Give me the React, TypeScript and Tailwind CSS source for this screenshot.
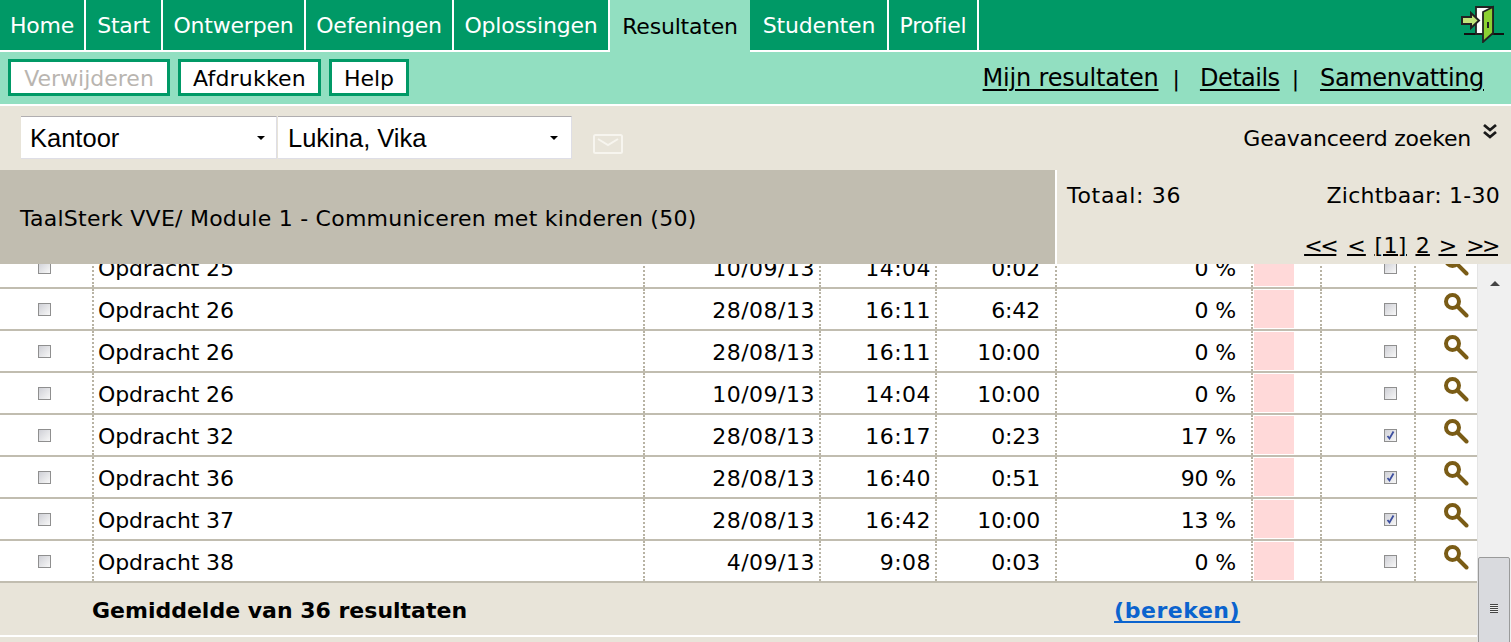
import React from "react";

const font = { fontFamily: '"DejaVu Sans", Verdana, sans-serif' };

const navItems = [
  { label: "Home", w: "w-[86px]" },
  { label: "Start", w: "w-[77px]" },
  { label: "Ontwerpen", w: "w-[143px]" },
  { label: "Oefeningen", w: "w-[148px]" },
  { label: "Oplossingen", w: "w-[156px]" },
];
const navItems2 = [
  { label: "Studenten", w: "w-[138px]" },
  { label: "Profiel", w: "w-[90px]" },
];

const rows: [string, string, string, string, string, boolean][] = [
  ["Opdracht 25", "10/09/13", "14:04", "0:02", "0 %", false],
  ["Opdracht 26", "28/08/13", "16:11", "6:42", "0 %", false],
  ["Opdracht 26", "28/08/13", "16:11", "10:00", "0 %", false],
  ["Opdracht 26", "10/09/13", "14:04", "10:00", "0 %", false],
  ["Opdracht 32", "28/08/13", "16:17", "0:23", "17 %", true],
  ["Opdracht 36", "28/08/13", "16:40", "0:51", "90 %", true],
  ["Opdracht 37", "28/08/13", "16:42", "10:00", "13 %", true],
  ["Opdracht 38", "4/09/13", "9:08", "0:03", "0 %", false],
];

function Check({ checked = false }: { checked?: boolean }) {
  return (
    <span className="relative block w-[13px] h-[13px] border border-[#8f8f8f] bg-gradient-to-br from-[#cfd0d6] to-[#f8f8f8]">
      {checked && (
        <svg viewBox="0 0 11 11" className="absolute inset-0 w-[11px] h-[11px]">
          <path d="M2.5 6 L4.5 8.5 L8.5 1.5" fill="none" stroke="#3d4f9f" strokeWidth="1.8" />
        </svg>
      )}
    </span>
  );
}

function Magnifier() {
  return (
    <svg width="26" height="28" viewBox="0 0 26 28" className="block">
      <circle cx="9.5" cy="9.5" r="6.5" fill="none" stroke="#7a5c16" strokeWidth="4" />
      <path d="M15 15 L23.5 23.5" stroke="#7a5c16" strokeWidth="4" strokeLinecap="round" />
    </svg>
  );
}

function Dot({ className = "" }: { className?: string }) {
  return <div className={"border-l-2 border-dotted border-[#b8b3a4] " + className} />;
}

function Row({ r }: { r: (typeof rows)[number] }) {
  return (
    <div className="flex h-[42px] border-b-2 border-[#c1bdb0] text-[22px] leading-[44px] text-black">
      <div className="w-[92px] flex justify-center pt-[14px] pr-[4px]">
        <Check />
      </div>
      <Dot />
      <div className="w-[549px] pl-[4px] tracking-[-0.15px]">{r[0]}</div>
      <Dot />
      <div className="w-[174px] pr-[4px] text-right tracking-[0.5px]">{r[1]}</div>
      <Dot />
      <div className="w-[114px] pr-[4px] text-right tracking-[0.45px]">{r[2]}</div>
      <Dot />
      <div className="w-[118px] pr-[15px] text-right tracking-[-0.15px]">{r[3]}</div>
      <Dot />
      <div className="w-[194px] pr-[15px] text-right tracking-[-0.15px]">{r[4]}</div>
      <Dot />
      <div className="w-[67px] pl-[1px] pt-[1px] pb-[1px]">
        <div className="w-[40px] h-full bg-[#ffd9d9]" />
      </div>
      <Dot />
      <div className="w-[92px] flex justify-end pt-[14px] pr-[17px]">
        <Check checked={r[5]} />
      </div>
      <Dot />
      <div className="flex-1 pl-[27px] pt-[3px]">
        <Magnifier />
      </div>
    </div>
  );
}

export default function App() {
  return (
    <div className="w-[1511px] h-[642px] overflow-hidden bg-white flex flex-col" style={font}>
      {/* nav */}
      <div className="h-[50px] bg-[#009966] flex text-[22px] tracking-[-0.2px] text-white relative shrink-0">
        {navItems.map((n) => (
          <div key={n.label} className={n.w + " h-[50px] border-r-2 border-white flex items-center justify-center"}>
            {n.label}
          </div>
        ))}
        <div className="w-[140px] h-[52px] bg-[#92dfc1] text-black flex items-center justify-center mr-[1px]">
          Resultaten
        </div>
        {navItems2.map((n) => (
          <div key={n.label} className={n.w + " h-[50px] border-r-2 border-white flex items-center justify-center"}>
            {n.label}
          </div>
        ))}
        <svg width="46" height="38" viewBox="0 0 46 38" className="absolute left-[1460px] top-[5px]">
          <path d="M4 29 H17 M33 29 H44" stroke="#111" strokeWidth="1.8" />
          <path d="M16 2 H33 V29 H16 Z" fill="#fff" stroke="#222" strokeWidth="1.8" />
          <path d="M23 7 L33 2 V28 L23 37 Z" fill="#8cd132" stroke="#222" strokeWidth="1.8" />
          <path d="M2 12 H11 V8 L19 15.5 L11 23 V19 H2 Z" fill="#bfe57a" stroke="#222" strokeWidth="2" />
          <rect x="27" y="17" width="2" height="6" fill="#222" />
        </svg>
      </div>
      <div className="h-[2px] bg-white shrink-0" />
      {/* toolbar */}
      <div className="h-[52px] bg-[#92dfc1] flex items-center justify-between pl-[8px] pr-[27px] shrink-0 text-black">
        <div className="flex gap-[8px] text-[22px] mb-[2px]">
          <button className="w-[162px] h-[37px] bg-white border-[3px] border-[#009966] text-[#b9b5b0]">Verwijderen</button>
          <button className="w-[143px] h-[37px] bg-white border-[3px] border-[#009966] tracking-[0.2px]">Afdrukken</button>
          <button className="w-[80px] h-[37px] bg-white border-[3px] border-[#009966]">Help</button>
        </div>
        <div className="flex items-center text-[24px]">
          <a className="underline decoration-2 underline-offset-[3px] tracking-[-0.2px]">Mijn resultaten</a>
          <span className="ml-[14px] mr-[20px] text-[22px]">|</span>
          <a className="underline decoration-2 underline-offset-[3px] tracking-[-0.5px]">Details</a>
          <span className="ml-[12px] mr-[21px] text-[22px]">|</span>
          <a className="underline decoration-2 underline-offset-[3px] tracking-[-0.35px]">Samenvatting</a>
        </div>
      </div>
      <div className="h-[2px] bg-white shrink-0" />
      {/* filter */}
      <div className="h-[64px] bg-[#e8e4d9] flex items-start pl-[21px] pr-[13px] pt-[10px] shrink-0 text-black">
        <div
          className="w-[256px] h-[43px] bg-white border-t border-t-[#b0aeb0] border-b border-b-[#dedee6] border-r border-r-[#dedee6] flex items-center justify-between pl-[9px] pr-[11px] text-[25.5px] leading-[44px] mr-[1px]"
          style={{ fontFamily: '"Liberation Sans", Arial, sans-serif' }}
        >
          Kantoor
          <span className="w-0 h-0 border-x-[4px] border-x-transparent border-t-[4px] border-t-black" />
        </div>
        <div
          className="w-[294px] h-[43px] bg-white border-t border-t-[#b0aeb0] border-b border-b-[#dedee6] border-r border-r-[#dedee6] flex items-center justify-between pl-[10px] pr-[13px] text-[25.5px] leading-[44px]"
          style={{ fontFamily: '"Liberation Sans", Arial, sans-serif' }}
        >
          Lukina, Vika
          <span className="w-0 h-0 border-x-[4px] border-x-transparent border-t-[4px] border-t-black" />
        </div>
        <svg width="30" height="20" viewBox="0 0 30 20" className="ml-[21px] mt-[18px]">
          <rect x="1" y="1" width="28" height="18" rx="1.5" fill="none" stroke="#f7f5ef" strokeWidth="2" />
          <path d="M5 5 L15 11 L25 5" fill="none" stroke="#f7f5ef" strokeWidth="2" />
        </svg>
        <div className="ml-auto flex items-start text-[22px] tracking-[-0.2px] pt-[6px]">
          Geavanceerd zoeken
          <svg width="16" height="18" viewBox="0 0 16 18" className="ml-[11px] mt-[1px]">
            <path d="M2 2 L8 7 L14 2 M2 9 L8 14 L14 9" fill="none" stroke="#1a1a1a" strokeWidth="2.8" />
          </svg>
        </div>
      </div>
      {/* heading */}
      <div className="h-[94px] flex shrink-0 text-black text-[22px]">
        <div className="w-[1055px] bg-[#c1bdb0] flex items-center pl-[20px] pt-[2px] tracking-[0.25px]">
          TaalSterk VVE/ Module 1 - Communiceren met kinderen (50)
        </div>
        <div className="w-[2px] bg-white" />
        <div className="flex-1 bg-[#e8e4d9] pl-[10px] pr-[11px] pt-[9px] flex flex-col">
          <div className="flex justify-between">
            <span className="tracking-[0.7px]">Totaal: 36</span>
            <span className="tracking-[0.25px]">Zichtbaar: 1-30</span>
          </div>
          <div className="flex justify-end gap-[9px] mt-[17px] text-[22px] underline decoration-2 underline-offset-[1px]">
            <a className="tracking-[-2.5px] pr-[2px]">&lt;&lt;</a>
            <a>&lt;</a>
            <a className="tracking-[0.3px]">[1]</a>
            <a>2</a>
            <a>&gt;</a>
            <a className="tracking-[-2.5px] pr-[2px]">&gt;&gt;</a>
          </div>
        </div>
      </div>
      {/* table and scrollbar */}
      <div className="flex h-[378px] shrink-0 overflow-hidden">
        <div className="w-[1477px] flex flex-col shrink-0">
          <div className="h-[319px] overflow-hidden shrink-0">
            <div className="mt-[-17px]">
              {rows.map((r, i) => (
                <Row key={i} r={r} />
              ))}
            </div>
          </div>
          <div className="h-[52px] bg-[#e8e4d9] flex items-center text-[22px] font-bold text-black pl-[92px] pt-[2px] shrink-0">
            <span>Gemiddelde van 36 resultaten</span>
            <a className="ml-[647px] text-[#0b63ce] underline decoration-2 underline-offset-[3px] tracking-[0.55px]">(bereken)</a>
          </div>
          <div className="h-[2px] bg-white shrink-0" />
          <div className="flex-1 bg-[#e8e4d9]" />
        </div>
        <div className="flex-1 bg-[#f0f0f0] relative border-l border-[#e4e4e4] flex justify-center">
          <span className="mt-[17px] w-0 h-0 border-x-[5px] border-x-transparent border-b-[5px] border-b-[#444]" />
          <div className="absolute left-0 right-[1px] top-[293px] h-[100px] bg-[#d9dade] border border-[#9a9a9a] rounded-[2px] flex justify-center pt-[46px]">
            <span className="block w-[8px] h-[9px] bg-[repeating-linear-gradient(#444_0,#444_1px,#eee_1px,#eee_2px)]" />
          </div>
        </div>
      </div>
    </div>
  );
}
